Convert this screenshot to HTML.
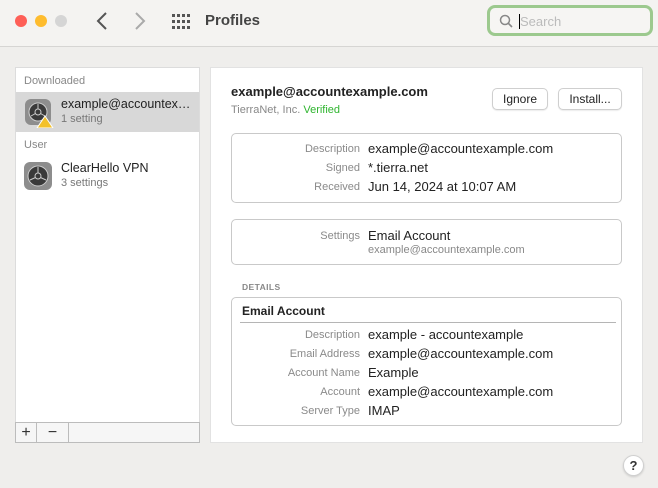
<!DOCTYPE html>
<html><head><style>
*{margin:0;padding:0;box-sizing:border-box}
body{width:658px;height:488px;background:#efeeec;font-family:"Liberation Sans",sans-serif;position:relative;overflow:hidden;color:#222}
.a{position:absolute}
.tb{left:0;top:0;width:658px;height:47px;background:#f4f3f1;border-bottom:1px solid #d6d5d3}
.dot{width:12px;height:12px;border-radius:50%;top:15px}
.lbl{color:#8a8a8a;font-size:11px;text-align:right;width:130px}
.val{font-size:13px;color:#222}
.box{border:1px solid #c9c9c9;border-radius:5px;background:#fff}
.btn{border:1px solid #cfcfcf;border-radius:5px;background:#fff;font-size:12px;text-align:center;line-height:20px;box-shadow:0 1px 1px rgba(0,0,0,.08)}
</style></head><body>
<div class="a tb"></div>
<div class="a dot" style="left:15px;background:#fe5f57"></div>
<div class="a dot" style="left:35px;background:#febc2e"></div>
<div class="a dot" style="left:55px;background:#d5d5d5"></div>
<svg class="a" style="left:95px;top:11px" width="14" height="20"><path d="M11 2 L3 10 L11 18" stroke="#555" stroke-width="2" fill="none"/></svg>
<svg class="a" style="left:133px;top:11px" width="14" height="20"><path d="M3 2 L11 10 L3 18" stroke="#aaa" stroke-width="2" fill="none"/></svg>
<svg class="a" style="left:172px;top:14px" width="18" height="16" fill="#555"><g><rect x="0" y="0" width="3" height="3"/><rect x="5" y="0" width="3" height="3"/><rect x="10" y="0" width="3" height="3"/><rect x="15" y="0" width="3" height="3"/><rect x="0" y="6" width="3" height="3"/><rect x="5" y="6" width="3" height="3"/><rect x="10" y="6" width="3" height="3"/><rect x="15" y="6" width="3" height="3"/><rect x="0" y="12" width="3" height="3"/><rect x="5" y="12" width="3" height="3"/><rect x="10" y="12" width="3" height="3"/><rect x="15" y="12" width="3" height="3"/></g></svg>
<div class="a" style="left:205px;top:12px;font-size:15px;font-weight:bold;color:#444">Profiles</div>
<div class="a" style="left:487px;top:5px;width:166px;height:31px;border:3px solid #9cc98e;border-radius:8px;background:#f6f5f3"></div>
<svg class="a" style="left:499px;top:14px" width="14" height="14"><circle cx="6" cy="6" r="4.5" stroke="#888" stroke-width="1.5" fill="none"/><path d="M9.5 9.5 L13 13" stroke="#888" stroke-width="1.6"/></svg>
<div class="a" style="left:519px;top:14px;width:1px;height:15px;background:#000"></div>
<div class="a" style="left:520px;top:14px;font-size:13px;color:#bbb">Search</div>

<div class="a" style="left:15px;top:67px;width:185px;height:376px;background:#fff;border:1px solid #dcdcdc"></div>
<div class="a" style="left:24px;top:75px;font-size:11px;color:#888">Downloaded</div>
<div class="a" style="left:16px;top:92px;width:183px;height:40px;background:#d8d8d8"></div>
<svg class="a" style="left:24px;top:98px" width="30" height="30"><rect x="1" y="1" width="26" height="26" rx="6" fill="#8d8d8d"/><circle cx="14" cy="14" r="9" fill="#3a3a3a" stroke="#ccc" stroke-width="1"/><circle cx="14" cy="14" r="3" fill="none" stroke="#ccc"/><path d="M14 11V6M11.5 15.5L7 18M16.5 15.5L21 18" stroke="#ccc"/><path d="M21 18 L29 30 L13 30Z" fill="#f3c12b" stroke="#fff"/></svg>
<div class="a" style="left:61px;top:97px;font-size:12.5px;width:130px;white-space:nowrap;overflow:hidden">example@accountex…</div>
<div class="a" style="left:61px;top:113px;font-size:11px;color:#777">1 setting</div>
<div class="a" style="left:24px;top:139px;font-size:11px;color:#888">User</div>
<svg class="a" style="left:23px;top:161px" width="30" height="30"><rect x="1" y="1" width="28" height="28" rx="6" fill="#8d8d8d"/><circle cx="15" cy="15" r="10" fill="#3a3a3a" stroke="#ccc"/><circle cx="15" cy="15" r="3" fill="none" stroke="#ccc"/><path d="M15 12V6M12.5 16.5L7 19M17.5 16.5L23 19" stroke="#ccc"/></svg>
<div class="a" style="left:61px;top:161px;font-size:12.5px">ClearHello VPN</div>
<div class="a" style="left:61px;top:177px;font-size:11px;color:#777">3 settings</div>
<div class="a" style="left:15px;top:422px;width:185px;height:21px;border:1px solid #bcbcbc;background:#f6f6f6"></div>
<div class="a" style="left:36px;top:422px;width:1px;height:21px;background:#bcbcbc"></div>
<div class="a" style="left:68px;top:422px;width:1px;height:21px;background:#bcbcbc"></div>
<div class="a" style="left:16px;top:422px;width:20px;height:21px;font-size:16px;line-height:21px;text-align:center;color:#333">+</div>
<div class="a" style="left:37px;top:422px;width:31px;height:21px;font-size:16px;line-height:21px;text-align:center;color:#333">−</div>

<div class="a" style="left:210px;top:67px;width:433px;height:376px;background:#fff;border:1px solid #e2e2e2"></div>
<div class="a" style="left:231px;top:84px;font-size:13px;font-weight:bold">example@accountexample.com</div>
<div class="a" style="left:231px;top:104px;font-size:11px;color:#888">TierraNet, Inc. <span style="color:#2fb52f">Verified</span></div>
<div class="a btn" style="left:492px;top:88px;width:56px;height:22px">Ignore</div>
<div class="a btn" style="left:558px;top:88px;width:64px;height:22px">Install...</div>

<div class="a box" style="left:231px;top:133px;width:391px;height:70px"></div>
<div class="a lbl" style="left:230px;top:143px">Description</div><div class="a val" style="left:368px;top:141px">example@accountexample.com</div>
<div class="a lbl" style="left:230px;top:162px">Signed</div><div class="a val" style="left:368px;top:160px">*.tierra.net</div>
<div class="a lbl" style="left:230px;top:181px">Received</div><div class="a val" style="left:368px;top:179px">Jun 14, 2024 at 10:07 AM</div>

<div class="a box" style="left:231px;top:219px;width:391px;height:46px"></div>
<div class="a lbl" style="left:230px;top:230px">Settings</div><div class="a val" style="left:368px;top:228px">Email Account</div>
<div class="a" style="left:368px;top:244px;font-size:11px;color:#888">example@accountexample.com</div>

<div class="a" style="left:242px;top:282px;font-size:8.5px;font-weight:bold;color:#888;letter-spacing:.4px">DETAILS</div>
<div class="a box" style="left:231px;top:297px;width:391px;height:129px"></div>
<div class="a" style="left:242px;top:304px;font-size:12px;font-weight:bold">Email Account</div>
<div class="a" style="left:240px;top:322px;width:376px;height:1px;background:#b5b5b5"></div>
<div class="a lbl" style="left:230px;top:329px">Description</div><div class="a val" style="left:368px;top:327px">example - accountexample</div>
<div class="a lbl" style="left:230px;top:348px">Email Address</div><div class="a val" style="left:368px;top:346px">example@accountexample.com</div>
<div class="a lbl" style="left:230px;top:367px">Account Name</div><div class="a val" style="left:368px;top:365px">Example</div>
<div class="a lbl" style="left:230px;top:386px">Account</div><div class="a val" style="left:368px;top:384px">example@accountexample.com</div>
<div class="a lbl" style="left:230px;top:405px">Server Type</div><div class="a val" style="left:368px;top:403px">IMAP</div>

<div class="a" style="left:623px;top:455px;width:21px;height:21px;border-radius:50%;background:#fff;border:1px solid #d0d0d0;box-shadow:0 1px 2px rgba(0,0,0,.15);text-align:center;font-size:13px;font-weight:bold;line-height:19px;color:#333">?</div>
</body></html>
